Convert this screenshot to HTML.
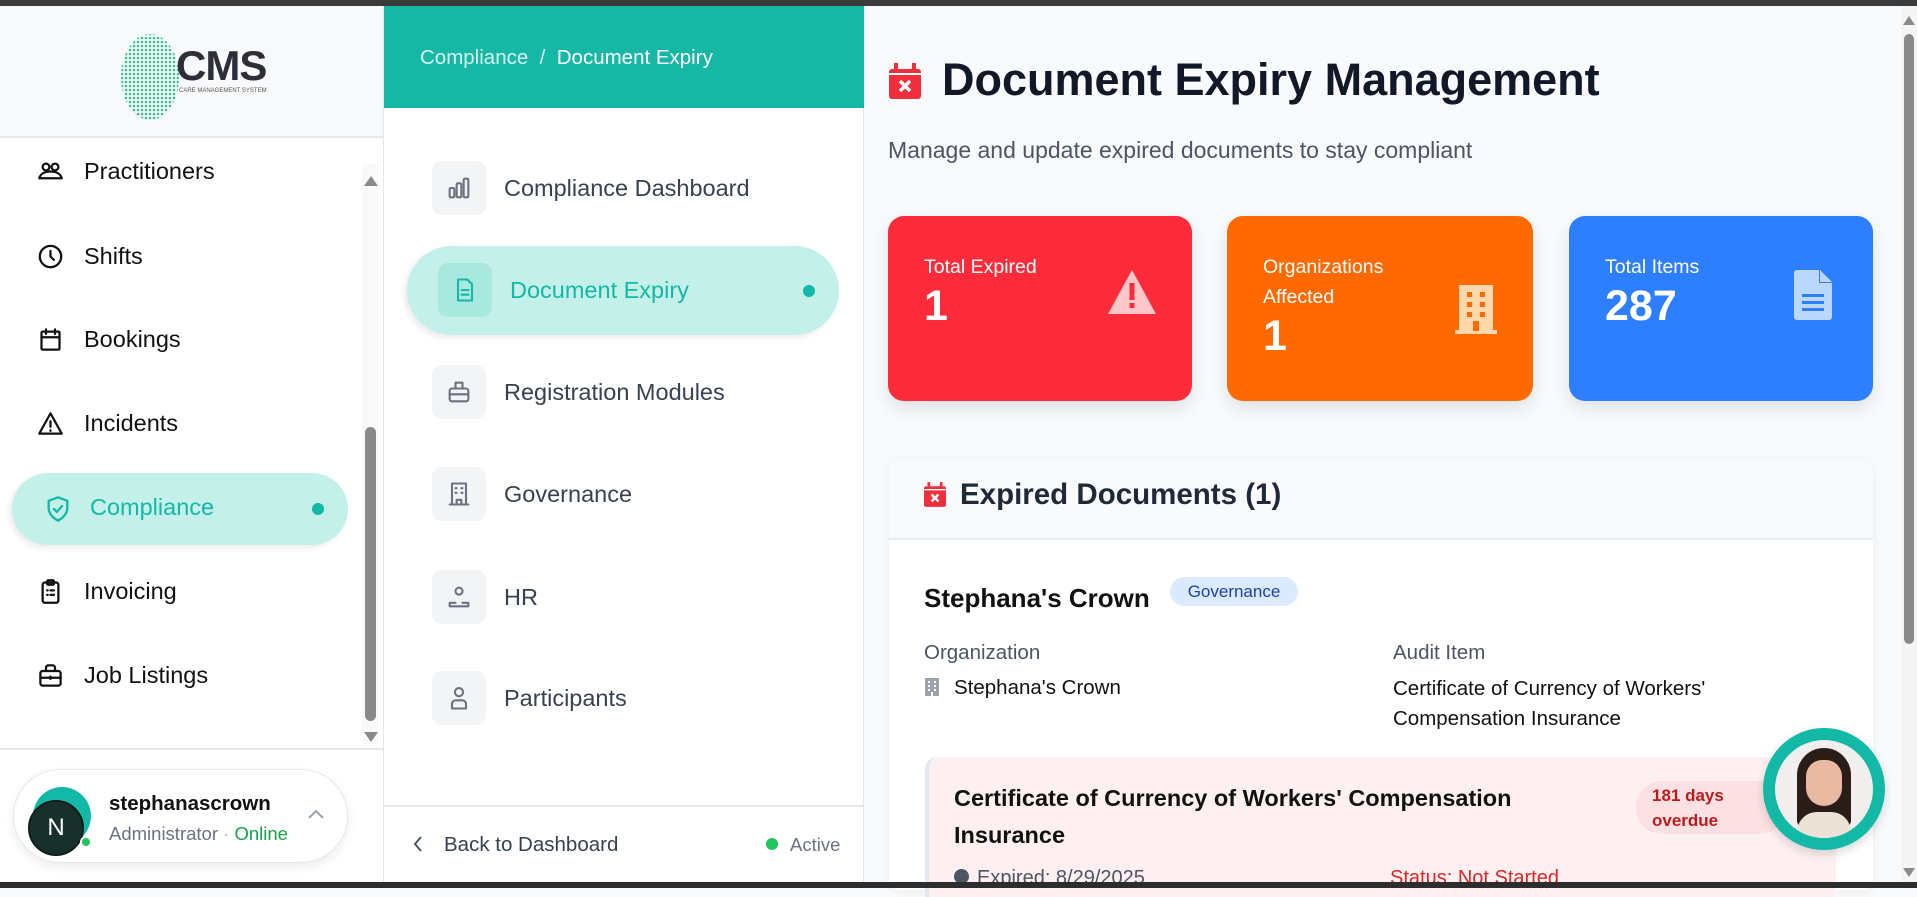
<!DOCTYPE html>
<html><head><meta charset="utf-8">
<style>
*{box-sizing:border-box;margin:0;padding:0}
body{width:1917px;height:888px;overflow:hidden;font-family:"Liberation Sans",Arial,sans-serif;background:#f8fafc;position:relative;color:#111827}
.a{position:absolute}
.nav{position:absolute;left:37px;display:flex;align-items:center;font-size:23.5px;color:#111}
.nav svg{width:27px;height:27px;margin-right:20px;fill:none;stroke:#111;stroke-width:2;stroke-linecap:round;stroke-linejoin:round}
.sub{position:absolute;left:432px;display:flex;align-items:center;font-size:23.5px;color:#374151}
.sub .ib{width:54px;height:54px;border-radius:10px;background:#f3f4f6;display:flex;align-items:center;justify-content:center;margin-right:18px}
.sub svg{width:28px;height:28px;fill:none;stroke:#6b7280;stroke-width:1.8;stroke-linecap:round;stroke-linejoin:round}
.card{position:absolute;top:216px;height:185px;border-radius:16px;color:#fff;box-shadow:0 8px 18px rgba(0,0,0,.10)}
.card .l{position:absolute;left:36px;top:36px;font-size:19.5px;line-height:30px}
.card .n{position:absolute;left:36px;font-size:43px;font-weight:bold}
</style></head><body>
<div class="a" style="left:0;top:0;width:1917px;height:6px;background:#3b3b3b"></div>

<!-- left sidebar -->
<div class="a" style="left:0;top:6px;width:384px;height:876px;background:#fff;border-right:1px solid #e5e7eb"></div>
<div class="a" style="left:0;top:6px;width:383px;height:132px;background:#f8f9fb;border-bottom:2px solid #e5e7eb"></div>
<svg class="a" style="left:120px;top:32px" width="62" height="90" viewBox="0 0 62 90">
<defs><pattern id="dt" width="4" height="4" patternUnits="userSpaceOnUse"><circle cx="2" cy="2" r="1.3" fill="#34c08f"/></pattern></defs>
<ellipse cx="30" cy="45" rx="29" ry="43" fill="url(#dt)"/></svg>
<div class="a" style="left:176px;top:42px;font-size:42px;font-weight:bold;color:#2e2e38;letter-spacing:-1px">CMS</div>
<div class="a" style="left:179px;top:88px;font-size:6px;color:#555">CARE MANAGEMENT SYSTEM</div>

<div class="a" style="left:0;top:140px;width:360px;height:606px;overflow:hidden">
<div class="nav" style="top:18px"><svg viewBox="0 0 24 24"><circle cx="8" cy="8" r="3"/><circle cx="16" cy="8" r="3"/><path d="M2 18c1-4 5-6 10-6s9 2 10 6H2z"/></svg>Practitioners</div>
<div class="nav" style="top:103px"><svg viewBox="0 0 24 24"><circle cx="12" cy="12" r="9.5"/><path d="M12 7v5l3 3"/></svg>Shifts</div>
<div class="nav" style="top:186px"><svg viewBox="0 0 24 24"><rect x="4" y="5" width="16" height="16" rx="1"/><path d="M8 3v4M16 3v4M4 10h16"/></svg>Bookings</div>
<div class="nav" style="top:270px"><svg viewBox="0 0 24 24"><path d="M12 3L2 21h20z"/><path d="M12 10v5M12 18v.5"/></svg>Incidents</div>
</div>
<div class="a" style="left:12px;top:473px;width:336px;height:72px;border-radius:36px;background:#c3f0e9;box-shadow:-3px 3px 6px rgba(0,0,0,.08)"></div>
<svg class="a" style="left:44px;top:495px" width="28" height="28" viewBox="0 0 24 24" fill="none" stroke="#14b8a6" stroke-width="2" stroke-linecap="round" stroke-linejoin="round"><path d="M12 2l8 3v6c0 5-4 9-8 11-4-2-8-6-8-11V5z"/><path d="M8.5 12l2.5 2.5 4.5-5"/></svg>
<div class="a" style="left:90px;top:494px;font-size:23.5px;color:#14b8a6">Compliance</div>
<div class="a" style="left:312px;top:503px;width:12px;height:12px;border-radius:50%;background:#14b8a6"></div>
<div class="nav" style="top:578px"><svg viewBox="0 0 24 24"><rect x="5" y="4" width="14" height="18" rx="2"/><rect x="9" y="2" width="6" height="4" rx="1"/><path d="M9 11h.5M12 11h3M9 15h.5M12 15h3"/></svg>Invoicing</div>
<div class="nav" style="top:662px"><svg viewBox="0 0 24 24"><rect x="3" y="8" width="18" height="13" rx="2"/><path d="M8 8V5a2 2 0 012-2h4a2 2 0 012 2v3M3 14h18M12 13v2"/></svg>Job Listings</div>
<!-- scrollbar -->
<div class="a" style="left:362px;top:164px;width:16px;height:580px;background:#f9f9f9"></div>
<div class="a" style="left:364px;top:176px;width:0;height:0;border-left:7px solid transparent;border-right:7px solid transparent;border-bottom:10px solid #8a8a8a"></div>
<div class="a" style="left:365px;top:427px;width:11px;height:294px;border-radius:6px;background:#8a8a8a"></div>
<div class="a" style="left:364px;top:732px;width:0;height:0;border-left:7px solid transparent;border-right:7px solid transparent;border-top:10px solid #8a8a8a"></div>
<div class="a" style="left:0;top:748px;width:383px;height:2px;background:#e5e7eb"></div>
<div class="a" style="left:13px;top:769px;width:335px;height:94px;border-radius:47px;background:#fff;border:1px solid #e5e7eb;box-shadow:0 4px 10px rgba(0,0,0,.08)"></div>
<div class="a" style="left:33px;top:787px;width:58px;height:58px;border-radius:50%;background:#14b8a6"></div>
<div class="a" style="left:28px;top:800px;width:56px;height:56px;border-radius:50%;background:#17302b;border:2px solid #0e1d1a;color:#fff;font-size:24px;display:flex;align-items:center;justify-content:center">N</div>
<div class="a" style="left:80px;top:836px;width:12px;height:12px;border-radius:50%;background:#22c55e;border:2px solid #fff"></div>
<div class="a" style="left:109px;top:792px;font-size:20.5px;font-weight:bold;color:#111">stephanascrown</div>
<div class="a" style="left:109px;top:823px;font-size:18.5px;color:#6b7280">Administrator <span style="color:#bbb">·</span> <span style="color:#16a34a">Online</span></div>
<svg class="a" style="left:307px;top:808px" width="18" height="12" viewBox="0 0 18 12" fill="none" stroke="#9ca3af" stroke-width="2"><path d="M2 10l7-7 7 7"/></svg>

<!-- second panel -->
<div class="a" style="left:384px;top:6px;width:480px;height:876px;background:#fff;border-right:1px solid #e5e7eb"></div>
<div class="a" style="left:384px;top:6px;width:480px;height:102px;background:#16b8a5"></div>
<div class="a" style="left:420px;top:46px;font-size:20.5px;color:#d5f5ef">Compliance &nbsp;/ &nbsp;<span style="color:#fff">Document Expiry</span></div>
<div class="sub" style="top:161px"><div class="ib"><svg viewBox="0 0 24 24"><rect x="4" y="12" width="4" height="8" rx="1"/><rect x="10" y="8" width="4" height="12" rx="1"/><rect x="16" y="4" width="4" height="16" rx="1"/></svg></div>Compliance Dashboard</div>
<div class="a" style="left:407px;top:246px;width:432px;height:89px;border-radius:45px;background:#c3f0e9;box-shadow:-3px 3px 6px rgba(0,0,0,.08)"></div>
<div class="sub" style="top:263px;left:438px;color:#14b8a6"><div class="ib" style="background:#a9e8dd"><svg viewBox="0 0 24 24" style="stroke:#14b8a6"><path d="M6 3h8l4 4v14H6z"/><path d="M9 12h6M9 16h6"/></svg></div>Document Expiry</div>
<div class="a" style="left:803px;top:285px;width:12px;height:12px;border-radius:50%;background:#14b8a6"></div>
<div class="sub" style="top:365px"><div class="ib"><svg viewBox="0 0 24 24"><path d="M9 4h6v5H9z"/><rect x="4" y="9" width="16" height="11" rx="2"/><path d="M4 14h16"/></svg></div>Registration Modules</div>
<div class="sub" style="top:467px"><div class="ib"><svg viewBox="0 0 24 24"><rect x="6" y="3" width="12" height="18"/><path d="M4 21h16M9 7h1M14 7h1M9 11h1M14 11h1M10 21v-4h4v4"/></svg></div>Governance</div>
<div class="sub" style="top:570px"><div class="ib"><svg viewBox="0 0 24 24"><circle cx="12" cy="7" r="3"/><path d="M4 20v-3h5M20 20v-3h-5M4 20h16"/></svg></div>HR</div>
<div class="sub" style="top:671px"><div class="ib"><svg viewBox="0 0 24 24"><circle cx="12" cy="7" r="3.5"/><path d="M6 21v-4a3 3 0 013-3h6a3 3 0 013 3v4z"/></svg></div>Participants</div>
<div class="a" style="left:384px;top:805px;width:480px;height:2px;background:#e5e7eb"></div>
<svg class="a" style="left:412px;top:835px" width="12" height="18" viewBox="0 0 12 18" fill="none" stroke="#4b5563" stroke-width="2"><path d="M9 2L3 9l6 7"/></svg>
<div class="a" style="left:444px;top:833px;font-size:20.5px;color:#374151">Back to Dashboard</div>
<div class="a" style="left:766px;top:838px;width:12px;height:12px;border-radius:50%;background:#22c55e"></div>
<div class="a" style="left:790px;top:834px;font-size:18.5px;color:#6b7280">Active</div>

<!-- main -->
<svg class="a" style="left:889px;top:63px" width="32" height="36" viewBox="0 0 32 36"><rect x="0" y="6" width="32" height="30" rx="3" fill="#ef2f3c"/><rect x="5" y="0" width="4" height="8" fill="#ef2f3c"/><rect x="23" y="0" width="4" height="8" fill="#ef2f3c"/><rect x="0" y="10" width="32" height="2" fill="#fff"/><path d="M11 18l10 10M21 18L11 28" stroke="#fff" stroke-width="3.5"/></svg>
<div class="a" style="left:942px;top:54px;font-size:45px;font-weight:bold;color:#111827">Document Expiry Management</div>
<div class="a" style="left:888px;top:137px;font-size:23px;color:#4b5563">Manage and update expired documents to stay compliant</div>

<div class="card" style="left:888px;width:304px;background:#fe2c3b"><div class="l">Total Expired</div><div class="n" style="top:66px">1</div>
<svg class="a" style="left:220px;top:54px" width="48" height="44" viewBox="0 0 48 44"><path d="M24 0L48 44H0z" fill="#ffc7c9"/><rect x="21.5" y="13" width="5" height="17" fill="#fe2c3b"/><rect x="21.5" y="33" width="5" height="5" fill="#fe2c3b"/></svg></div>
<div class="card" style="left:1227px;width:306px;background:#ff6a00"><div class="l">Organizations<br>Affected</div><div class="n" style="top:96px">1</div>
<svg class="a" style="left:228px;top:69px" width="42" height="49" viewBox="0 0 42 49"><rect x="4" y="0" width="34" height="46" fill="#ffd7aa"/><rect x="0" y="45" width="42" height="4" fill="#ffd7aa"/><g fill="#ff6a00"><rect x="12" y="7" width="5" height="5"/><rect x="25" y="7" width="5" height="5"/><rect x="12" y="17" width="5" height="5"/><rect x="25" y="17" width="5" height="5"/><rect x="12" y="27" width="5" height="5"/><rect x="25" y="27" width="5" height="5"/><rect x="18" y="36" width="6" height="10"/></g></svg></div>
<div class="card" style="left:1569px;width:304px;background:#2d7fff"><div class="l">Total Items</div><div class="n" style="top:66px">287</div>
<svg class="a" style="left:225px;top:54px" width="38" height="50" viewBox="0 0 38 50"><path d="M0 3a3 3 0 013-3h22l13 13v34a3 3 0 01-3 3H3a3 3 0 01-3-3z" fill="#bcd7ff"/><path d="M25 0v13h13" fill="#2d7fff"/><path d="M26 0l12 12H26z" fill="#bcd7ff"/><g fill="#2d7fff"><rect x="8" y="24" width="22" height="3"/><rect x="8" y="31" width="22" height="3"/><rect x="8" y="38" width="22" height="3"/></g></svg></div>

<div class="a" style="left:889px;top:460px;width:984px;height:430px;background:#fff;border-radius:10px;box-shadow:0 2px 10px rgba(0,0,0,.06)"></div>
<div class="a" style="left:889px;top:460px;width:984px;height:80px;background:#f8fafc;border-bottom:2px solid #e5eaf0;border-radius:10px 10px 0 0"></div>
<svg class="a" style="left:924px;top:482px" width="22" height="25" viewBox="0 0 32 36"><rect x="0" y="6" width="32" height="30" rx="3" fill="#ef2f3c"/><rect x="5" y="0" width="4" height="8" fill="#ef2f3c"/><rect x="23" y="0" width="4" height="8" fill="#ef2f3c"/><rect x="0" y="10" width="32" height="2" fill="#fff"/><path d="M11 18l10 10M21 18L11 28" stroke="#fff" stroke-width="3.5"/></svg>
<div class="a" style="left:960px;top:478px;font-size:29.5px;font-weight:bold;color:#1f2937">Expired Documents (1)</div>

<div class="a" style="left:924px;top:583px;font-size:26px;font-weight:bold;color:#111">Stephana's Crown</div>
<div class="a" style="left:1170px;top:577px;width:128px;height:29px;border-radius:15px;background:#dbeafe;color:#1e40af;font-size:17px;text-align:center;line-height:29px">Governance</div>
<div class="a" style="left:924px;top:641px;font-size:20.5px;color:#4b5563">Organization</div>
<div class="a" style="left:1393px;top:641px;font-size:20.5px;color:#4b5563">Audit Item</div>
<svg class="a" style="left:925px;top:678px" width="14" height="18" viewBox="0 0 14 18"><rect x="0" y="0" width="14" height="18" fill="#9ca3af"/><g fill="#fff"><rect x="3" y="3" width="2" height="2"/><rect x="9" y="3" width="2" height="2"/><rect x="3" y="7" width="2" height="2"/><rect x="9" y="7" width="2" height="2"/><rect x="3" y="11" width="2" height="2"/><rect x="9" y="11" width="2" height="2"/><rect x="6" y="14" width="2" height="4"/></g></svg>
<div class="a" style="left:954px;top:676px;font-size:20.5px;color:#111">Stephana's Crown</div>
<div class="a" style="left:1393px;top:674px;font-size:20.5px;line-height:30px;color:#111">Certificate of Currency of Workers'<br>Compensation Insurance</div>

<div class="a" style="left:925px;top:757px;width:911px;height:140px;background:#fef0f0;border-radius:12px 0 0 0;border-left:4px solid #e3e8ef"></div>
<div class="a" style="left:954px;top:780px;font-size:23.5px;font-weight:bold;line-height:37px;color:#111">Certificate of Currency of Workers' Compensation<br>Insurance</div>
<div class="a" style="left:1636px;top:781px;width:150px;height:53px;border-radius:26px;background:#fde0e2"></div>
<div class="a" style="left:1652px;top:783px;font-size:17px;font-weight:bold;line-height:25px;color:#b91c1c">181 days<br>overdue</div>
<div class="a" style="left:954px;top:867px;font-size:20px;color:#4b5563"><span style="display:inline-block;width:15px;height:15px;border-radius:50%;background:#4b5563;margin-right:8px"></span>Expired: 8/29/2025</div>
<div class="a" style="left:1390px;top:867px;font-size:20px;color:#dc2626">Status: Not Started</div>
<div class="a" style="left:0;top:882px;width:1917px;height:6px;background:#2d2d2d"></div>

<div class="a" style="left:1763px;top:728px;width:122px;height:122px;border-radius:50%;background:#14b8a6;box-shadow:0 4px 10px rgba(0,0,0,.15)"></div>
<div class="a" style="left:1775px;top:740px;width:98px;height:98px;border-radius:50%;background:#f1efed;overflow:hidden">
<div class="a" style="left:22px;top:8px;width:54px;height:82px;border-radius:27px 27px 10px 10px;background:#2a1d18"></div>
<div class="a" style="left:31px;top:20px;width:36px;height:46px;border-radius:18px 18px 20px 20px;background:#e9b9a2"></div>
<div class="a" style="left:22px;top:72px;width:54px;height:30px;border-radius:20px 20px 0 0;background:#ece3d6"></div>
</div>

<!-- right scrollbar -->
<div class="a" style="left:1901px;top:6px;width:16px;height:876px;background:#f5f5f5"></div>
<div class="a" style="left:1903px;top:16px;width:0;height:0;border-left:6px solid transparent;border-right:6px solid transparent;border-bottom:9px solid #8a8a8a"></div>
<div class="a" style="left:1904px;top:34px;width:10px;height:610px;border-radius:5px;background:#8a8a8a"></div>
<div class="a" style="left:1903px;top:868px;width:0;height:0;border-left:6px solid transparent;border-right:6px solid transparent;border-top:9px solid #8a8a8a"></div>
</body></html>
